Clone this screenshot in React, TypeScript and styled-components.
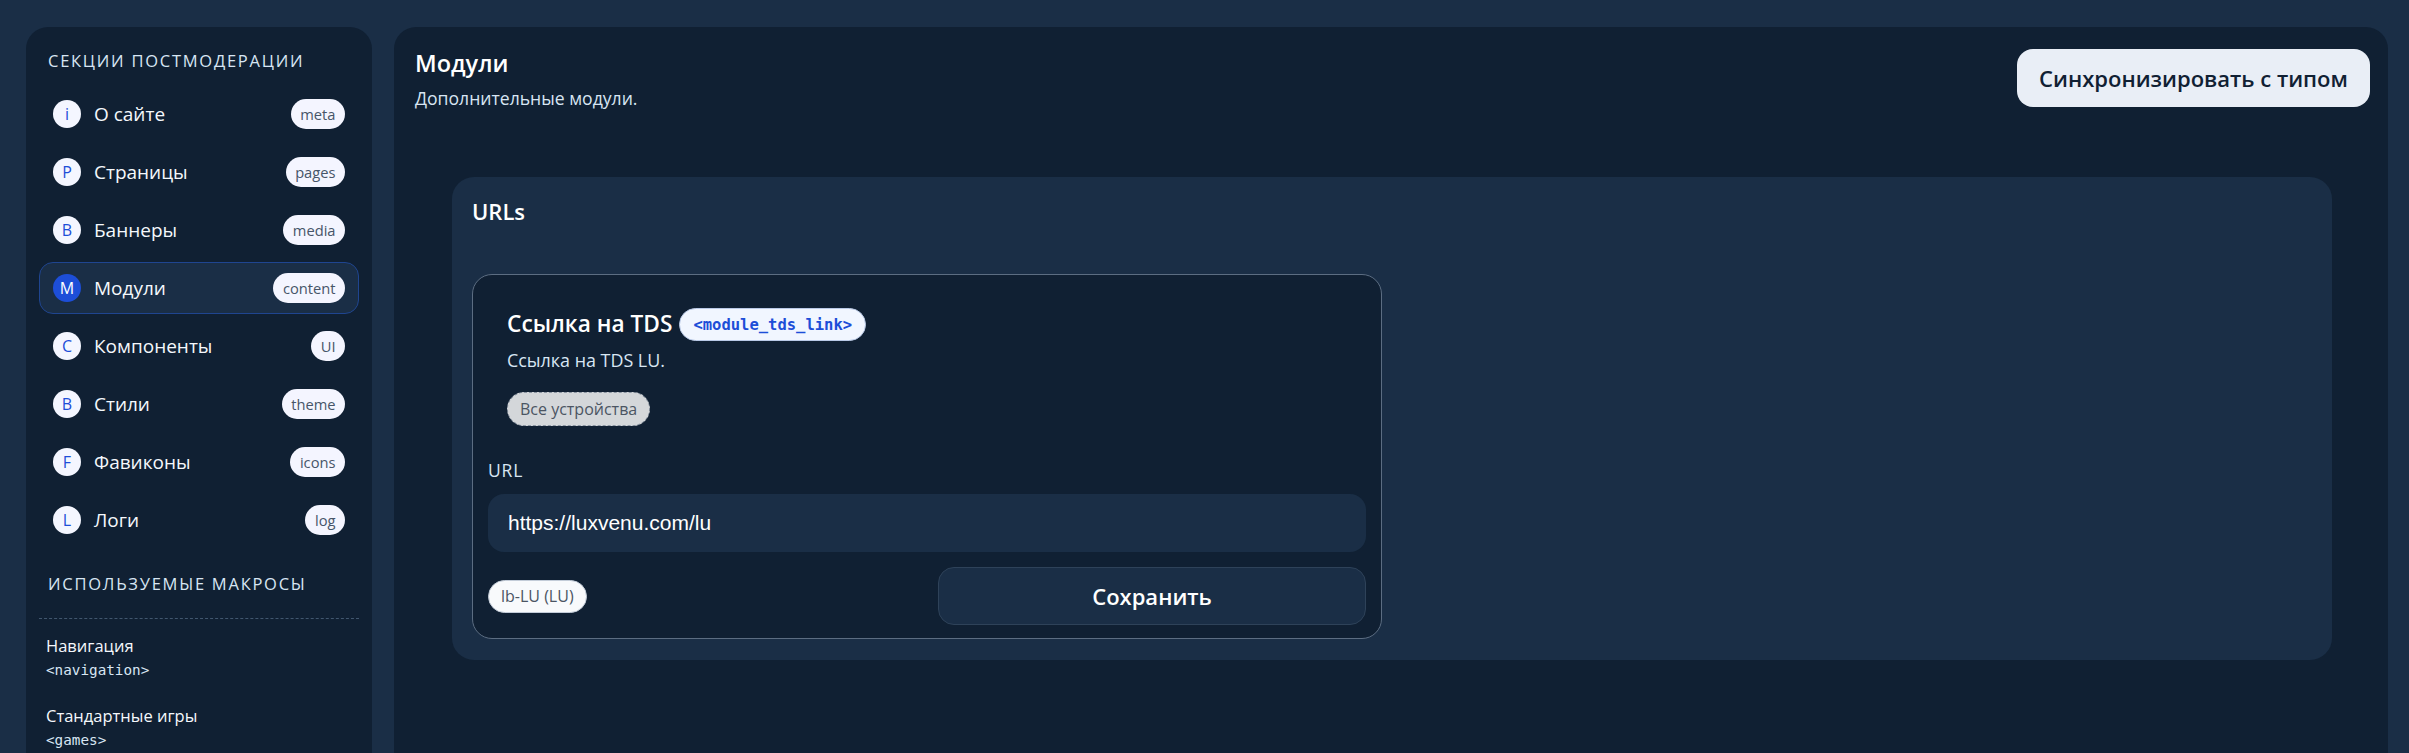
import React from "react";
import styled, { createGlobalStyle } from "styled-components";

const Global = createGlobalStyle`
  html, body { margin: 0; padding: 0; height: 100%; background: #1a2e46; overflow: hidden; }
  * { box-sizing: border-box; }
  body { font-family: "Open Sans", "Noto Sans", sans-serif; }
`;

const Page = styled.div`
  display: flex;
  gap: 22px;
  height: 753px;
  padding: 27px 21px 0 26px;
  overflow: hidden;
  background: #1a2e46;
`;
const Sidebar = styled.aside`
  width: 346px;
  flex: none;
  height: 780px;
  background: #102033;
  border-radius: 22px;
  padding: 23px 13px 0;
`;
const SideHeading = styled.h3`
  margin: 0 0 0 9px;
  font-size: 16.5px;
  line-height: 22px;
  font-weight: 400;
  letter-spacing: 1.75px;
  color: #d8e6f3;
  text-transform: uppercase;
`;
const NavList = styled.nav`
  display: flex;
  flex-direction: column;
  gap: 6px;
  margin-top: 16px;
`;
const NavRow = styled.div<{ $active?: boolean }>`
  display: flex;
  align-items: center;
  height: 52px;
  padding: 0 13px;
  border-radius: 14px;
  border: 1px solid ${(p) => (p.$active ? "#1f4590" : "transparent")};
  background: ${(p) => (p.$active ? "#1a2e46" : "transparent")};
`;
const NavIcon = styled.span<{ $active?: boolean }>`
  width: 28px;
  height: 28px;
  flex: none;
  border-radius: 50%;
  display: flex;
  align-items: center;
  justify-content: center;
  font-size: 16px;
  background: ${(p) => (p.$active ? "#1d4ed8" : "#f4f6ff")};
  color: ${(p) => (p.$active ? "#ffffff" : "#1d4ed8")};
`;
const NavLabel = styled.span`
  margin-left: 13px;
  flex: 1;
  font-size: 19px;
  color: #f5f8fc;
`;
const NavTag = styled.span`
  height: 30px;
  padding: 0 9.5px;
  display: flex;
  align-items: center;
  border-radius: 15px;
  background: #f4f5ff;
  color: #475569;
  font-size: 14.7px;
`;
const MacroHeading = styled(SideHeading)`
  margin-top: 27px;
  padding-bottom: 23px;
`;
const MacroList = styled.div`
  border-top: 1px dashed #41566e;
  padding: 15px 0 0 7px;
  display: flex;
  flex-direction: column;
  gap: 24px;
`;
const Macro = styled.div`
  display: flex;
  flex-direction: column;
  gap: 2px;
`;
const MacroName = styled.span`
  font-size: 16.5px;
  line-height: 24px;
  color: #f5f8fc;
`;
const MacroCode = styled.code`
  font-family: "DejaVu Sans Mono", "Liberation Mono", monospace;
  font-size: 14.3px;
  line-height: 20px;
  color: #d8e6f3;
`;
const Main = styled.main`
  flex: 1;
  height: 780px;
  background: #102033;
  border-radius: 22px;
  padding: 22px 18px 0 21px;
`;
const Header = styled.header`
  display: flex;
  justify-content: space-between;
  align-items: flex-start;
  height: 128px;
`;
const HeaderText = styled.div`
  display: flex;
  flex-direction: column;
`;
const Title = styled.h1`
  margin: 0 0 5px;
  font-size: 23.5px;
  line-height: 28px;
  font-weight: 600;
  color: #ffffff;
`;
const Subtitle = styled.p`
  margin: 0;
  font-size: 17.6px;
  line-height: 32px;
  color: #d8e6f3;
`;
const SyncButton = styled.button`
  width: 353px;
  height: 58px;
  border: none;
  border-radius: 16px;
  background: #e9eef6;
  color: #102033;
  font: 600 22px "Open Sans", sans-serif;
`;
const Section = styled.section`
  margin: 0 38px 0 37px;
  height: 483px;
  background: #1a2e46;
  border-radius: 22px;
  padding: 16px 20px;
`;
const SectionTitle = styled.h2`
  margin: 0;
  height: 81px;
  font-size: 22px;
  line-height: 36px;
  font-weight: 600;
  color: #ffffff;
`;
const Card = styled.article`
  width: 910px;
  height: 365px;
  background: #102033;
  border: 1px solid #5c6d82;
  border-radius: 20px;
  padding: 33px 15px 0;
`;
const CardHead = styled.div`
  padding-left: 19px;
`;
const CardTitleRow = styled.div`
  display: flex;
  align-items: center;
  gap: 7px;
  height: 33px;
`;
const CardTitle = styled.h3`
  margin: 0;
  padding-bottom: 2px;
  font-size: 22.7px;
  font-weight: 600;
  color: #ffffff;
`;
const CodeChip = styled.code`
  height: 33px;
  padding: 0 13px;
  display: flex;
  align-items: center;
  border-radius: 17px;
  background: #f1f6ff;
  border: 1px solid #b9c9e6;
  font-family: "DejaVu Sans Mono", "Liberation Mono", monospace;
  font-weight: 700;
  font-size: 15.5px;
  color: #1d4ed8;
`;
const CardDesc = styled.p`
  margin: 6px 0 0;
  font-size: 17.9px;
  line-height: 26px;
  color: #d8e6f3;
`;
const DevicePill = styled.span`
  display: inline-flex;
  align-items: center;
  height: 34px;
  margin-top: 19px;
  padding: 0 12px;
  border-radius: 17px;
  background: #d4d7da;
  border: 1px dashed #8a94a1;
  font-size: 16px;
  color: #4b5563;
`;
const FieldLabel = styled.label`
  display: block;
  margin-top: 32px;
  font-size: 17.5px;
  line-height: 24px;
  letter-spacing: 0.8px;
  color: #d8e6f3;
`;
const UrlInput = styled.input`
  display: block;
  width: 100%;
  height: 58px;
  margin-top: 12px;
  padding: 0 20px;
  border: none;
  outline: none;
  border-radius: 16px;
  background: #1a2e46;
  color: #ffffff;
  font: 400 21px "Liberation Sans", Arial, sans-serif;
`;
const CardFoot = styled.div`
  display: flex;
  justify-content: space-between;
  align-items: center;
  margin-top: 15px;
`;
const LocaleChip = styled.span`
  height: 33px;
  padding: 0 12px;
  display: flex;
  align-items: center;
  border-radius: 17px;
  background: #f8fafc;
  border: 1px solid #c3ccd8;
  font-size: 16px;
  color: #4b5563;
`;
const SaveButton = styled.button`
  width: 428px;
  height: 58px;
  border: 1px solid #2e4259;
  border-radius: 16px;
  background: #1a2e46;
  color: #ffffff;
  font: 600 22px "Open Sans", sans-serif;
`;

const items = [
  ["i", "О сайте", "meta"],
  ["P", "Страницы", "pages"],
  ["B", "Баннеры", "media"],
  ["M", "Модули", "content"],
  ["C", "Компоненты", "UI"],
  ["B", "Стили", "theme"],
  ["F", "Фавиконы", "icons"],
  ["L", "Логи", "log"],
];

export default function App() {
  return (
    <Page>
      <Global />
      <Sidebar>
        <SideHeading>Секции постмодерации</SideHeading>
        <NavList>
          {items.map(([icon, label, tag]) => {
            const active = label === "Модули";
            return (
              <NavRow key={label} $active={active}>
                <NavIcon $active={active}>{icon}</NavIcon>
                <NavLabel>{label}</NavLabel>
                <NavTag>{tag}</NavTag>
              </NavRow>
            );
          })}
        </NavList>
        <MacroHeading>Используемые макросы</MacroHeading>
        <MacroList>
          <Macro>
            <MacroName>Навигация</MacroName>
            <MacroCode>&lt;navigation&gt;</MacroCode>
          </Macro>
          <Macro>
            <MacroName>Стандартные игры</MacroName>
            <MacroCode>&lt;games&gt;</MacroCode>
          </Macro>
        </MacroList>
      </Sidebar>
      <Main>
        <Header>
          <HeaderText>
            <Title>Модули</Title>
            <Subtitle>Дополнительные модули.</Subtitle>
          </HeaderText>
          <SyncButton>Синхронизировать с типом</SyncButton>
        </Header>
        <Section>
          <SectionTitle>URLs</SectionTitle>
          <Card>
            <CardHead>
              <CardTitleRow>
                <CardTitle>Ссылка на TDS</CardTitle>
                <CodeChip>&lt;module_tds_link&gt;</CodeChip>
              </CardTitleRow>
              <CardDesc>Ссылка на TDS LU.</CardDesc>
              <DevicePill>Все устройства</DevicePill>
            </CardHead>
            <FieldLabel>URL</FieldLabel>
            <UrlInput readOnly defaultValue="https://luxvenu.com/lu" />
            <CardFoot>
              <LocaleChip>lb-LU (LU)</LocaleChip>
              <SaveButton>Сохранить</SaveButton>
            </CardFoot>
          </Card>
        </Section>
      </Main>
    </Page>
  );
}
